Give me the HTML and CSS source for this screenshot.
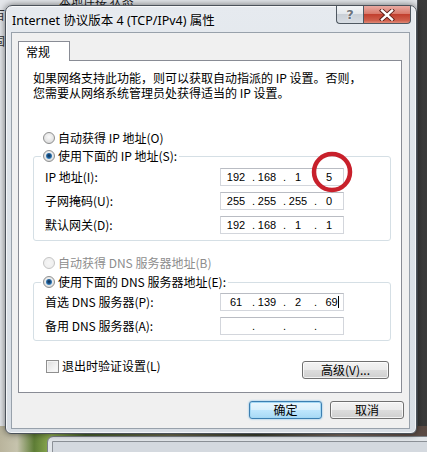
FILE: index.html
```html
<!DOCTYPE html>
<html lang="zh-CN">
<head>
<meta charset="utf-8">
<title>Internet 协议版本 4 (TCP/IPv4) 属性</title>
<link rel="stylesheet" href="styles.css">
</head>
<body>
<div class="desktop">
  <div class="bgwin bgwin-back">
    <span class="bgtitle">本地连接 状态</span>
    <span class="bgleft">百<br><br>固</span>
  </div>
  <div class="photo"></div>
  <div class="bgwin bgwin-low"></div>

  <div class="dialog">
    <div class="titlebar">
      <span class="title">Internet 协议版本 4 (TCP/IPv4) 属性</span>
      <div class="capbtns">
        <div class="cap help">?</div>
        <div class="cap close">
          <svg width="16" height="12" viewBox="0 0 16 12">
            <path d="M3 1.5 L13 10.5 M13 1.5 L3 10.5" stroke="#5a1a14" stroke-width="4.2" stroke-linecap="square" fill="none"/>
            <path d="M3 1.5 L13 10.5 M13 1.5 L3 10.5" stroke="#ffffff" stroke-width="2.4" stroke-linecap="square" fill="none"/>
          </svg>
        </div>
      </div>
    </div>

    <div class="client">
      <div class="tabs"><div class="tab">常规</div></div>
      <div class="panel">
        <p class="desc">如果网络支持此功能，则可以获取自动指派的 IP 设置。否则，<br>您需要从网络系统管理员处获得适当的 IP 设置。</p>

        <div class="opt opt-first"><span class="radio"></span>自动获得 IP 地址(O)</div>
        <fieldset class="group group-ip">
          <legend><span class="radio on"></span>使用下面的 IP 地址(S):</legend>
          <div class="row">
            <span class="lbl">IP 地址(I):</span>
            <div class="ip"><span class="n">192</span><span class="d">.</span><span class="n">168</span><span class="d">.</span><span class="n">1</span><span class="d">.</span><span class="n">5</span></div>
          </div>
          <div class="row">
            <span class="lbl">子网掩码(U):</span>
            <div class="ip"><span class="n">255</span><span class="d">.</span><span class="n">255</span><span class="d">.</span><span class="n">255</span><span class="d">.</span><span class="n">0</span></div>
          </div>
          <div class="row">
            <span class="lbl">默认网关(D):</span>
            <div class="ip"><span class="n">192</span><span class="d">.</span><span class="n">168</span><span class="d">.</span><span class="n">1</span><span class="d">.</span><span class="n">1</span></div>
          </div>
        </fieldset>

        <div class="opt opt-dns disabled"><span class="radio"></span>自动获得 DNS 服务器地址(B)</div>
        <fieldset class="group group-dns">
          <legend><span class="radio on"></span>使用下面的 DNS 服务器地址(E):</legend>
          <div class="row">
            <span class="lbl">首选 DNS 服务器(P):</span>
            <div class="ip"><span class="n">61</span><span class="d">.</span><span class="n">139</span><span class="d">.</span><span class="n">2</span><span class="d">.</span><span class="n"><span class="typed">69</span><span class="caret"></span></span></div>
          </div>
          <div class="row">
            <span class="lbl">备用 DNS 服务器(A):</span>
            <div class="ip"><span class="n"></span><span class="d">.</span><span class="n"></span><span class="d">.</span><span class="n"></span><span class="d">.</span><span class="n"></span></div>
          </div>
        </fieldset>

        <div class="bottomrow">
          <div class="check"><span class="box"></span>退出时验证设置(L)</div>
          <div class="btn btn-adv">高级(V)...</div>
        </div>
      </div>

      <div class="actions">
        <div class="btn btn-ok">确定</div>
        <div class="btn btn-cancel">取消</div>
      </div>
    </div>
  </div>

  <svg class="mark" width="46" height="46" viewBox="0 0 46 46">
    <circle cx="23" cy="23" r="18" fill="none" stroke="#c8202b" stroke-width="4.5"/>
  </svg>
</div>
</body>
</html>
```
FILE: styles.css
```css
html, body {
  margin: 0;
  padding: 0;
}

body {
  font-family: "Noto Sans CJK SC", sans-serif;
  font-size: 12px;
  color: #000;
}

.desktop {
  position: relative;
  width: 427px;
  height: 452px;
  overflow: hidden;
  background: linear-gradient(90deg, #5a5a5a 0, #3a3a3a 100%);
}

/* background windows on the desktop */
.bgwin {
  position: absolute;
  box-sizing: border-box;
}

.bgwin-back {
  left: -30px;
  top: -40px;
  width: 448px;
  height: 480px;
  background: #e4e7eb;
  border: 1px solid #50555c;
  border-radius: 6px;
}

.bgtitle {
  position: absolute;
  left: 88px;
  top: 33px;
  font-size: 12px;
  line-height: 14px;
  color: #1a1a1a;
}

.bgleft {
  position: absolute;
  left: 22px;
  top: 47px;
  font-size: 12px;
  line-height: 13px;
  color: #333;
}

.photo {
  position: absolute;
  left: 0;
  top: 426px;
  width: 427px;
  height: 26px;
  background: linear-gradient(90deg, #b9b49c 0, #c6c3ad 4%, #5e7d36 8%, #8fae52 12%, #48612c 20%, #6c6a4e 40%, #3b3f2e 60%, #7a6a60 80%, #5a4a44 100%);
}

.bgwin-low {
  left: 47px;
  top: 436px;
  width: 420px;
  height: 40px;
  background: #d4d9df;
  border: 1px solid #7c8288;
  border-radius: 6px;
  box-shadow: inset 0 0 0 4px #e2e6ea, inset 0 0 0 5px #8c9197;
}

/* dialog window */
.dialog {
  position: absolute;
  left: 5px;
  top: 5px;
  width: 412px;
  height: 429px;
  box-sizing: border-box;
  border: 1px solid #4b525a;
  border-radius: 7px 7px 6px 6px;
  background: linear-gradient(180deg, #e6eaef 0, #dde3e9 40%, #d8dee5 100%);
  box-shadow: inset 0 0 0 1px rgba(255, 255, 255, 0.7), 0 0 7px rgba(0, 0, 0, 0.55);
  padding: 0 6px 4px 5px;
  display: flex;
  flex-direction: column;
}

.titlebar {
  height: 26px;
  display: flex;
  align-items: flex-start;
  flex: none;
}

.title {
  font-family: "Noto Sans", "Noto Sans CJK SC", sans-serif;
  font-size: 12.5px;
  line-height: 14px;
  margin: 8px 0 0 1px;
  color: #000;
  text-shadow: 0 0 6px rgba(255, 255, 255, 0.9);
  white-space: nowrap;
}

.capbtns {
  margin-left: auto;
  display: flex;
  margin-right: -1px;
}

.cap {
  height: 18px;
  box-sizing: border-box;
  border: 1px solid #4f5861;
  border-top: none;
  display: flex;
  align-items: center;
  justify-content: center;
}

.help {
  width: 27px;
  border-right: none;
  border-radius: 0 0 0 4px;
  background: linear-gradient(180deg, #f3f5f7 0, #e4e8ec 45%, #c9cfd6 50%, #d8dde3 100%);
  font-family: "DejaVu Sans", sans-serif;
  font-size: 13px;
  font-weight: bold;
  color: #6d747c;
  text-shadow: 0 0 1px #fff, 0 0 2px #fff;
}

.close {
  width: 48px;
  border-radius: 0 0 4px 0;
  background: linear-gradient(180deg, #e9aaa2 0, #d97a6c 45%, #c2402f 50%, #cf5f4c 85%, #e08a78 100%);
}

.client {
  flex: 1;
  border: 1px solid #98a1ab;
  background: #f0f0f0;
  padding: 8px 7px 8px 6px;
  display: flex;
  flex-direction: column;
}

.tabs {
  display: flex;
}

.tab {
  position: relative;
  z-index: 1;
  width: 52px;
  height: 20px;
  box-sizing: border-box;
  border: 1px solid #898c95;
  border-bottom: none;
  background: #fff;
  padding-left: 7px;
  line-height: 19px;
  margin-bottom: -1px;
}

.panel {
  border: 1px solid #898c95;
  background: #fff;
  padding: 9px 10px 13px 14px;
}

.desc {
  margin: 0;
  line-height: 15px;
  white-space: nowrap;
}

.opt {
  display: flex;
  align-items: center;
  line-height: 14px;
  margin-left: 10px;
  white-space: nowrap;
}

.opt-first {
  margin-top: 31px;
}

.opt-dns {
  margin-top: 15px;
}

.disabled {
  color: #8d8d8d;
}

.radio {
  width: 12px;
  height: 12px;
  box-sizing: border-box;
  border-radius: 50%;
  border: 1px solid #8e8f8f;
  background: radial-gradient(circle at 50% 40%, #fafafa 0, #e6e6e6 55%, #cfcfcf 100%);
  margin-right: 3px;
  flex: none;
  display: flex;
  align-items: center;
  justify-content: center;
}

.disabled .radio {
  border-color: #c4c4c4;
  background: radial-gradient(circle, #f6f6f6 0, #ececec 100%);
}

.radio.on::after {
  content: "";
  width: 6px;
  height: 6px;
  border-radius: 50%;
  background: radial-gradient(circle at 50% 45%, #0f2d4c 0, #1f5a92 45%, #4ea2e0 80%, #8cc8f0 100%);
}

.group {
  margin: 4px 0 0 0;
  border: 1px solid #d5dfe5;
  border-radius: 3px;
  padding: 5px 0 6px 11px;
  min-width: 0;
}

.group-dns {
  margin-top: 5px;
  padding-top: 4px;
  padding-bottom: 5px;
}

.group legend {
  display: flex;
  align-items: center;
  line-height: 14px;
  padding: 0 2px;
  margin-left: -4px;
  white-space: nowrap;
}

.row {
  display: grid;
  grid-template-columns: 175px 124px;
  align-items: center;
  height: 18px;
}

.row + .row {
  margin-top: 6px;
}

.lbl {
  line-height: 14px;
  white-space: nowrap;
}

.ip {
  width: 124px;
  height: 18px;
  box-sizing: border-box;
  border: 1px solid #d3d6dc;
  border-top-color: #b9bcc3;
  padding-left: 3px;
  display: flex;
  align-items: center;
  font-family: "Liberation Sans", sans-serif;
  font-size: 11px;
  line-height: 14px;
  color: #000;
}

.n {
  width: 24px;
  text-align: center;
  display: flex;
  justify-content: center;
  align-items: center;
}

.d {
  width: 7px;
  text-align: right;
}

.typed {
  margin-left: 6px;
}

.caret {
  width: 1px;
  height: 12px;
  background: #000;
  margin-left: 0;
}

.bottomrow {
  margin-top: 18px;
  display: flex;
  align-items: flex-start;
  justify-content: space-between;
  padding-right: 2px;
}

.check {
  display: flex;
  align-items: center;
  line-height: 14px;
  margin-left: 13px;
}

.box {
  width: 13px;
  height: 13px;
  box-sizing: border-box;
  border: 1px solid #8f8f8f;
  background: linear-gradient(135deg, #dcdcdc 0, #f2f2f2 60%, #fbfbfb 100%);
  box-shadow: inset 0 0 0 1px #f4f4f4;
  margin-right: 3px;
}

.btn {
  height: 18px;
  box-sizing: border-box;
  border: 1px solid #707070;
  border-radius: 3px;
  background: linear-gradient(180deg, #f3f3f3 0, #ebebeb 48%, #dcdcdc 52%, #cfcfcf 100%);
  box-shadow: inset 0 0 0 1px rgba(255, 255, 255, 0.75);
  display: flex;
  align-items: center;
  justify-content: center;
  line-height: 14px;
  white-space: nowrap;
}

.btn-adv {
  width: 87px;
  margin-top: 2px;
}

.actions {
  margin-top: 8px;
  display: flex;
  justify-content: flex-end;
  gap: 8px;
  margin-right: -2px;
}

.btn-ok {
  width: 73px;
  border-color: #3c7fb1;
  background: linear-gradient(180deg, #eaf6fd 0, #d9f0fc 48%, #bee6fd 52%, #a7d9f5 100%);
  box-shadow: inset 0 0 0 1px #a4d8f4, 0 0 2px #5fb2e6;
}

.btn-cancel {
  width: 74px;
}

/* red annotation circle over the screenshot */
.mark {
  position: absolute;
  left: 309px;
  top: 149px;
}
```
